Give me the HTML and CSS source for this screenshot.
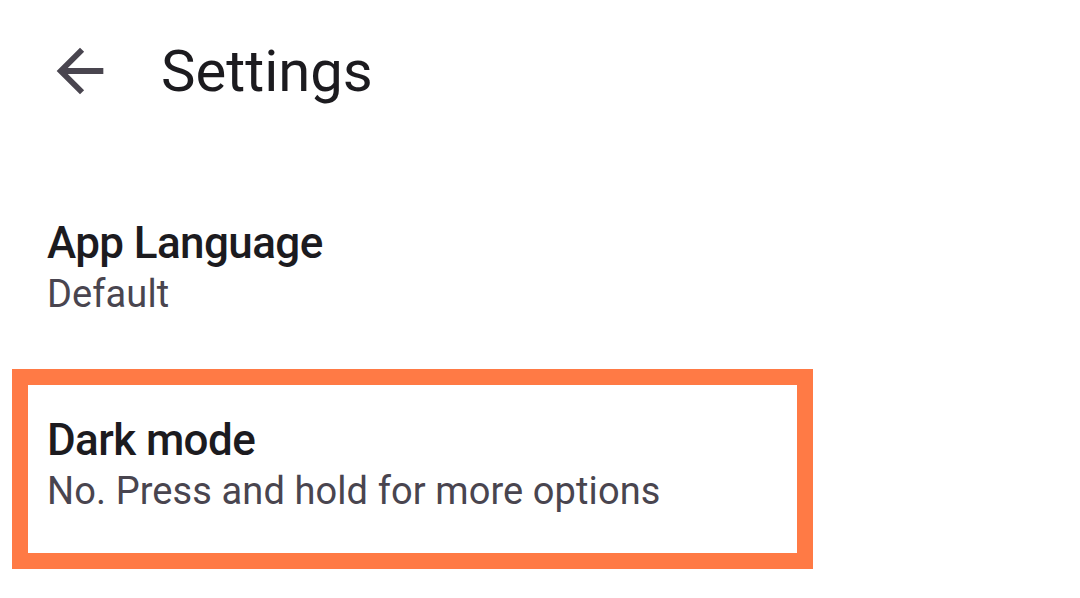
FILE: index.html
```html
<!DOCTYPE html>
<html>
<head>
<meta charset="utf-8">
<link rel="stylesheet" href="styles.css">
</head>
<body>
<div class="app">
  <header class="toolbar">
    <div class="nav-icon">
      <svg viewBox="0 0 24 24" width="70" height="70"><path fill="#49454F" d="M20 11H7.83l5.59-5.59L12 4l-8 8 8 8 1.41-1.41L7.83 13H20v-2z"/></svg>
    </div>
    <h1 class="title">Settings</h1>
  </header>
  <section class="list">
    <div class="pref">
      <div class="pref-title">App Language</div>
      <div class="pref-summary">Default</div>
    </div>
    <div class="pref pref-highlight">
      <div class="pref-title">Dark mode</div>
      <div class="pref-summary">No. Press and hold for more options</div>
    </div>
  </section>
</div>
</body>
</html>
```
FILE: styles.css
```css
html, body {
  margin: 0;
  padding: 0;
  background: #ffffff;
}
.app {
  width: 1080px;
  height: 598px;
  overflow: hidden;
  font-family: Roboto, "Noto Sans", sans-serif;
}
.toolbar {
  display: flex;
  align-items: center;
  height: 142px;
  padding-left: 45px;
}
.nav-icon {
  width: 70px;
  height: 70px;
  display: flex;
}
.title {
  margin: 0 0 0 46px;
  font-size: 58px;
  font-weight: 400;
  color: #1C1B1F;
}
.list {
  display: flex;
  flex-direction: column;
  padding-top: 73px;
}
.pref {
  box-sizing: border-box;
  padding: 0 0 0 47px;
  height: 154px;
  display: flex;
  flex-direction: column;
  justify-content: flex-start;
}
.pref-title {
  font-size: 44px;
  letter-spacing: -0.6px;
  font-weight: 500;
  color: #1C1B1F;
  line-height: 56px;
}
.pref-summary {
  font-size: 38px;
  letter-spacing: 0.1px;
  color: #49454F;
  line-height: 46px;
}
.pref-highlight {
  margin-left: 12px;
  width: 801px;
  height: 200px;
  border: 16px solid #FF7A45;
  padding: 27px 0 0 19px;
}
```
